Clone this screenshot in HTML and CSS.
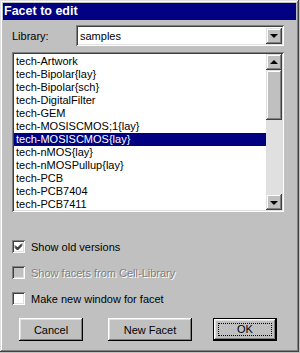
FILE: index.html
```html
<!DOCTYPE html>
<html lang="en">
    <head>
        <meta charset="UTF-8">
        <title>Facet to edit</title>
        <link rel="stylesheet" href="styles.css">
    </head>
    <body>

        <div class="dialog">
            <!-- Title Bar -->
            <div class="titlebar">Facet to edit</div>

            <div class="content">
                <!-- Library chooser -->
                <div class="library-row">
                    <span class="label">Library:</span>
                    <div class="combo">
                        <span class="combo-text">samples</span>
                        <span class="sbutton"><span class="arrow-down"></span></span>
                    </div>
                </div>

                <!-- Facet list -->
                <div class="list">
                    <div class="items">
                        <div class="item">tech-Artwork</div>
                        <div class="item">tech-Bipolar{lay}</div>
                        <div class="item">tech-Bipolar{sch}</div>
                        <div class="item">tech-DigitalFilter</div>
                        <div class="item">tech-GEM</div>
                        <div class="item">tech-MOSISCMOS;1{lay}</div>
                        <div class="item selected">tech-MOSISCMOS{lay}</div>
                        <div class="item">tech-nMOS{lay}</div>
                        <div class="item">tech-nMOSPullup{lay}</div>
                        <div class="item">tech-PCB</div>
                        <div class="item">tech-PCB7404</div>
                        <div class="item">tech-PCB7411</div>
                    </div>
                    <div class="scrollbar">
                        <span class="sbutton"><span class="arrow-up"></span></span>
                        <span class="thumb"></span>
                        <span class="track"></span>
                        <span class="sbutton"><span class="arrow-down"></span></span>
                    </div>
                </div>

                <!-- Options -->
                <div class="options">
                    <label class="check">
                        <span class="box">
                            <svg width="9" height="9" viewBox="0 0 9 9"><path d="M1 3.5 L3.5 6 L8 1.5 M1 4.5 L3.5 7 L8 2.5 M1 5.5 L3.5 8 L8 3.5" stroke="#000" stroke-width="1" fill="none"/></svg>
                        </span>
                        Show old versions
                    </label>
                    <label class="check disabled">
                        <span class="box"></span>
                        Show facets from Cell-Library
                    </label>
                    <label class="check">
                        <span class="box"></span>
                        Make new window for facet
                    </label>
                </div>

                <!-- Buttons -->
                <div class="buttons">
                    <button class="btn cancel">Cancel</button>
                    <button class="btn new-facet">New Facet</button>
                    <button class="btn ok"><span class="focus">OK</span></button>
                </div>
            </div>
        </div>

    </body>
</html>
```

FILE: styles.css
```css
/* Page */
body {
  margin: 0;
  background-color: #C0C0C0;
  font-family: "Liberation Sans", Arial, sans-serif;
  font-size: 11px;
  color: #000;
}

/* Dialog frame */
.dialog {
  width: 299px;
  height: 352px;
  box-sizing: border-box;
  padding: 3px;
  background-color: #C0C0C0;
  box-shadow: inset -1px -1px #404040, inset 1px 1px #DFDFDF,
              inset -2px -2px #808080, inset 2px 2px #FFFFFF;
}

.titlebar {
  height: 17px;
  line-height: 17px;
  padding-left: 1px;
  background-color: #000080;
  color: white;
  font-weight: bold;
  font-size: 12.5px;
}

.content {
  padding: 5px 12px 0 9px;
}

/* Library row */
.library-row {
  display: flex;
  align-items: center;
  height: 21px;
}

.label {
  width: 64px;
}

.combo {
  flex: 1;
  height: 21px;
  box-sizing: border-box;
  padding: 2px;
  display: flex;
  align-items: center;
  background-color: white;
  box-shadow: inset 1px 1px #808080, inset -1px -1px #FFFFFF,
              inset 2px 2px #404040, inset -2px -2px #DFDFDF;
}

.combo-text {
  flex: 1;
  padding-left: 2px;
}

/* Raised scroll/arrow button */
.sbutton {
  width: 16px;
  height: 16px;
  box-sizing: border-box;
  display: flex;
  align-items: center;
  justify-content: center;
  background-color: #C0C0C0;
  box-shadow: inset -1px -1px #404040, inset 1px 1px #DFDFDF,
              inset -2px -2px #808080, inset 2px 2px #FFFFFF;
}

.arrow-down,
.arrow-up {
  width: 0;
  height: 0;
  border-left: 4px solid transparent;
  border-right: 4px solid transparent;
}

.arrow-down {
  border-top: 4px solid #000;
  margin-top: 1px;
}

.arrow-up {
  border-bottom: 4px solid #000;
  margin-top: -1px;
}

/* List box */
.list {
  margin-top: 6px;
  height: 160px;
  box-sizing: border-box;
  padding: 2px;
  display: flex;
  background-color: white;
  box-shadow: inset 1px 1px #808080, inset -1px -1px #FFFFFF,
              inset 2px 2px #404040, inset -2px -2px #DFDFDF;
}

.items {
  flex: 1;
  padding-top: 1px;
  overflow: hidden;
}

.item {
  height: 13px;
  line-height: 13px;
  padding-left: 2px;
  white-space: nowrap;
}

.item.selected {
  background-color: #000080;
  color: white;
}

.scrollbar {
  width: 16px;
  display: flex;
  flex-direction: column;
}

.thumb {
  height: 50px;
  box-sizing: border-box;
  background-color: #C0C0C0;
  box-shadow: inset -1px -1px #404040, inset 1px 1px #DFDFDF,
              inset -2px -2px #808080, inset 2px 2px #FFFFFF;
}

.track {
  flex: 1;
  background-color: #E0E0E0;
}

/* Check boxes */
.options {
  margin-top: 28px;
}

.check {
  display: flex;
  align-items: center;
  height: 13px;
  margin-bottom: 13px;
}

.box {
  width: 13px;
  height: 13px;
  box-sizing: border-box;
  margin-right: 6px;
  display: flex;
  align-items: center;
  justify-content: center;
  background-color: white;
  box-shadow: inset 1px 1px #808080, inset -1px -1px #FFFFFF,
              inset 2px 2px #404040, inset -2px -2px #DFDFDF;
}

.check.disabled {
  color: #808080;
  text-shadow: 1px 1px #FFFFFF;
}

.check.disabled .box {
  background-color: #C0C0C0;
}

/* Buttons */
.buttons {
  display: flex;
}

.btn {
  height: 23px;
  padding: 0;
  border: none;
  font-family: "Liberation Sans", Arial, sans-serif;
  font-size: 11px;
  color: #000;
  background-color: #C0C0C0;
  box-shadow: inset -1px -1px #000000, inset 1px 1px #FFFFFF,
              inset -2px -2px #808080, inset 2px 2px #DFDFDF;
}

.cancel {
  width: 64px;
  margin-left: 7px;
}

.new-facet {
  width: 84px;
  margin-left: 25px;
}

.ok {
  width: 64px;
  margin-left: 21px;
  padding: 4px;
  border: 1px solid #000;
}

.focus {
  display: block;
  height: 100%;
  box-sizing: border-box;
  border: 1px dotted #000;
  line-height: 11px;
}
```
